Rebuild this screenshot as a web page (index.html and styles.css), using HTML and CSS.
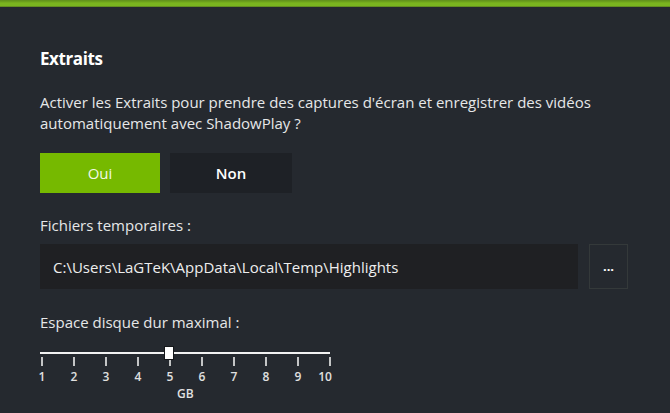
FILE: index.html
```html
<!DOCTYPE html>
<html lang="fr">
<head>
<meta charset="utf-8">
<link rel="stylesheet" href="styles.css">
</head>
<body>
<div class="topbar"></div>
<main class="panel">
  <h1 class="title">Extraits</h1>
  <p class="question">Activer les Extraits pour prendre des captures d'écran et enregistrer des vidéos automatiquement avec ShadowPlay ?</p>
  <div class="choices">
    <button class="btn btn-yes">Oui</button>
    <button class="btn btn-no">Non</button>
  </div>
  <div class="label label-path">Fichiers temporaires :</div>
  <div class="path-row">
    <div class="path-field">C:\Users\LaGTeK\AppData\Local\Temp\Highlights</div>
    <button class="browse">...</button>
  </div>
  <div class="label label-disk">Espace disque dur maximal :</div>
  <div class="slider">
    <div class="track"></div>
    <div class="thumb"></div>
    <div class="ticks">
      <div class="tick"><span class="mark"></span><span class="num">1</span></div>
      <div class="tick"><span class="mark"></span><span class="num">2</span></div>
      <div class="tick"><span class="mark"></span><span class="num">3</span></div>
      <div class="tick"><span class="mark"></span><span class="num">4</span></div>
      <div class="tick"><span class="mark"></span><span class="num">5</span></div>
      <div class="tick"><span class="mark"></span><span class="num">6</span></div>
      <div class="tick"><span class="mark"></span><span class="num">7</span></div>
      <div class="tick"><span class="mark"></span><span class="num">8</span></div>
      <div class="tick"><span class="mark"></span><span class="num">9</span></div>
      <div class="tick tick-last"><span class="mark"></span><span class="num">10</span></div>
    </div>
    <div class="unit">GB</div>
  </div>
</main>
</body>
</html>
```
FILE: styles.css
```css
html, body {
  margin: 0;
  padding: 0;
}
body {
  width: 670px;
  height: 413px;
  overflow: hidden;
  background: #25292f;
  color: #e6e7e8;
  font-family: "Open Sans", "Noto Sans", sans-serif;
}
.topbar {
  height: 7px;
  background: linear-gradient(#5f8f1c 0, #6fa51c 2px, #7ab51f 3px, #7ab51f 6px, #4d6a22 7px);
}
.panel {
  padding: 40px 0 0 40px;
}
.title {
  margin: 0;
  font-size: 17px;
  letter-spacing: -0.4px;
  font-weight: 700;
  line-height: 24px;
  color: #ffffff;
}
.question {
  margin: 21px 0 0;
  font-size: 15px;
  line-height: 21px;
  width: 600px;
}
.choices {
  display: flex;
  gap: 10px;
  margin-top: 19px;
}
.btn {
  width: 120px;
  height: 40px;
  border: 0;
  font-family: inherit;
  font-size: 15px;
  padding: 0;
}
.btn-yes {
  background: #76b900;
  color: #f2f8e6;
}
.btn-no {
  width: 122px;
  background: #1e2126;
  color: #ffffff;
  font-weight: 600;
}
.label {
  font-size: 15px;
  line-height: 20px;
}
.label-path {
  margin-top: 22px;
}
.path-row {
  display: flex;
  gap: 11px;
  margin-top: 9px;
  height: 45px;
}
.path-field {
  width: 525px;
  padding-left: 13px;
  background: #1f2023;
  display: flex;
  align-items: center;
  font-size: 15px;
  color: #eeeeee;
}
.browse {
  width: 39px;
  height: 45px;
  box-sizing: border-box;
  background: #25292f;
  border: 1px solid #34393a;
  color: #ffffff;
  font-family: inherit;
  font-size: 13px;
  font-weight: 700;
  padding: 0 0 2px;
}
.label-disk {
  margin-top: 23px;
}
.slider {
  position: relative;
  width: 292px;
  margin-top: 20px;
  height: 70px;
}
.track {
  height: 2px;
  width: 290px;
  background: #f2f2f2;
}
.thumb {
  position: absolute;
  left: 124px;
  top: -6px;
  width: 8px;
  height: 12px;
  background: #ffffff;
  border: 1px solid #15171a;
}
.ticks {
  display: flex;
  gap: 30px;
  margin-top: 3px;
  padding-left: 1px;
}
.tick {
  width: 2px;
  flex-shrink: 0;
  display: flex;
  flex-direction: column;
  align-items: center;
}
.mark {
  width: 2px;
  height: 9px;
  background: #c4c5c6;
}
.num {
  font-size: 12px;
  font-weight: 600;
  line-height: 16px;
  margin-top: 3px;
  color: #e0e0e0;
}
.tick-last .num {
  transform: translateX(-5px);
}
.unit {
  font-size: 12px;
  font-weight: 600;
  line-height: 14px;
  margin-left: 137px;
  margin-top: 2px;
  color: #e0e0e0;
}
```
